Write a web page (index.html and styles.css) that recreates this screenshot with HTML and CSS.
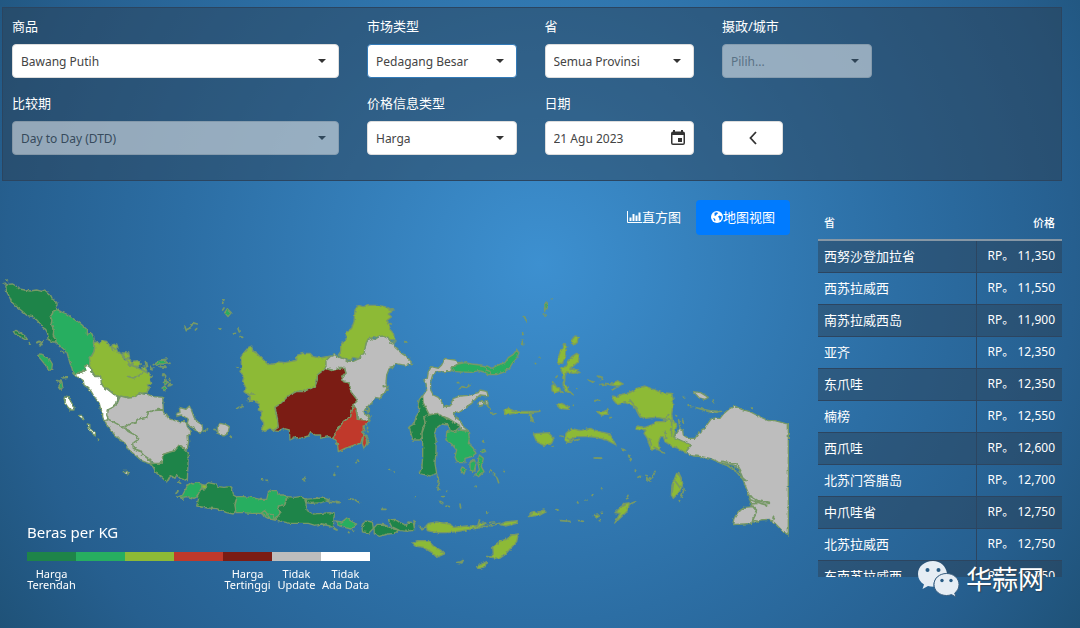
FILE: index.html
```html
<!DOCTYPE html>
<html lang="zh-CN">
<head>
<meta charset="utf-8">
<meta name="viewport" content="width=device-width, initial-scale=1">
<title>地图视图</title>
<link rel="stylesheet" href="styles.css">
</head>
<body>
<form class="filters">
  <div class="field field-wide">
    <label for="commodity">商品</label>
    <div class="control"><select id="commodity"><option>Bawang Putih</option></select></div>
  </div>
  <div class="field">
    <label for="market">市场类型</label>
    <div class="control"><select id="market" class="focused"><option>Pedagang Besar</option></select></div>
  </div>
  <div class="field">
    <label for="province">省</label>
    <div class="control"><select id="province"><option>Semua Provinsi</option></select></div>
  </div>
  <div class="field">
    <label for="city">摄政/城市</label>
    <div class="control disabled"><select id="city" class="placeholder" disabled><option>Pilih...</option></select></div>
  </div>
  <div class="field field-wide row-start">
    <label for="period">比较期</label>
    <div class="control disabled"><select id="period" disabled><option>Day to Day (DTD)</option></select></div>
  </div>
  <div class="field">
    <label for="info">价格信息类型</label>
    <div class="control"><select id="info"><option>Harga</option></select></div>
  </div>
  <div class="field">
    <label for="date">日期</label>
    <div class="date">
      <input id="date" type="text" value="21 Agu 2023">
      <button type="button" class="calendar" aria-label="日期">
        <svg viewBox="0 0 14 15" width="14" height="15"><path d="M2 0h2v1.500h6V0h2v1.500A2 2 0 0 1 14 3.500V13a2 2 0 0 1-2 2H2a2 2 0 0 1-2-2V3.500A2 2 0 0 1 2 1.500zM1.500 5v8c0 .4.200.600.600.600h9.800c.4 0 .6-.2.600-.6V5zM7 8h4v4H7z" fill="#333" fill-rule="evenodd"/></svg>
      </button>
    </div>
  </div>
  <div class="field field-end">
    <button type="button" class="back" aria-label="返回">
      <svg viewBox="0 0 8 14" width="8" height="14"><path d="M7 1 1.500 7 7 13" fill="none" stroke="#333" stroke-width="1.800"/></svg>
    </button>
  </div>
</form>

<main class="content">
  <section class="map-panel">
    <div class="tabs">
      <button type="button" class="tab"><svg viewBox="0 0 15 12" width="15" height="12"><path d="M.5 0v11.500H15" fill="none" stroke="#fff"/><path d="M3.500 10V6.500M6.500 10V3M9.500 10V4.500M12.500 10V1.500" fill="none" stroke="#fff" stroke-width="2"/></svg>直方图</button>
      <button type="button" class="tab active"><svg viewBox="0 0 12 12" width="12" height="12"><circle cx="6" cy="6" r="6" fill="#fff"/><path d="M3.500 1.800 6 1.200 7.200 2.200 5.800 3.200 5 4.500 3.600 5zM7 5.500 8.500 4.500 10.800 5.500 10 8.500 8.500 9.500 8.300 7.500zM2 7l2 .8.5 1.700-.8.8z" fill="#007bff"/></svg>地图视图</button>
    </div>
    <div class="map">
      <svg class="map-svg" viewBox="0 235 790 393" role="img" aria-label="Indonesia">
        <defs>
          <filter id="coast" x="0" y="235" width="790" height="393" filterUnits="userSpaceOnUse" color-interpolation-filters="sRGB">
            <feTurbulence type="fractalNoise" baseFrequency="0.28" numOctaves="2" seed="4" result="n"/>
            <feDisplacementMap in="SourceGraphic" in2="n" scale="3" xChannelSelector="R" yChannelSelector="G"/>
          </filter>
        </defs>
        <g class="regions" filter="url(#coast)">
          <g transform="translate(0 270) scale(.33333)">
            <path class="low" d="M17 50 22 43 38 42 48 48 58 57 75 60 90 63 110 60 125 64 134 60 142 67 152 76 158 88 170 97 172 104 166 112 170 120 160 124 157 132 151 140 156 150 154 160 158 172 161 185 160 195 167 205 168 216 158 216 150 212 144 208 143 190 137 178 128 172 120 160 108 148 98 140 80 136 65 122 50 110 35 96 28 80 20 65zM40 184 48 181 60 188 75 198 82 208 74 208 60 200 45 192z"/>
            <path class="mid" d="M170 118 185 126 200 132 218 145 235 156 250 168 262 180 262 192 275 190 282 205 280 220 284 232 282 245 275 258 268 262 270 275 268 288 258 292 262 300 245 305 235 308 225 316 220 312 216 295 210 280 205 262 200 245 188 235 178 226 168 216 167 205 160 195 161 185 158 172 154 160 156 150 151 140 157 132 160 124zM113 257 122 252 130 255 135 263 150 270 157 282 155 300 148 300 136 285 128 275zM178 340l8-4 2 16-6 8-5-6z"/>
            <path class="olive" d="M282 218 290 215 300 222 308 212 320 214 328 228 338 232 350 240 355 248 368 256 372 268 385 275 390 285 410 292 425 300 440 308 457 318 450 328 455 340 442 345 448 355 440 368 420 370 408 384 398 386 380 380 358 380 340 372 325 358 310 350 300 330 302 318 285 318 278 305 272 295 268 288 270 275 268 262 275 258 282 245 284 232zM334 230l4-6 12-2 4 10-6 10-10 0zM366 249l20 0 3 14-14 0zM376 264l14 4 8 14-10 2zM395 275l17-3 12 10-6 8-18-2zM425 293l10-2 6 12-8 2z"/>
            <path class="none" d="M225 316 235 308 245 306 258 302 254 290 262 286 272 294 272 305 285 320 302 320 304 340 310 350 325 360 340 372 356 382 348 395 346 410 332 418 322 420 326 435 322 452 312 452 308 440 308 428 302 418 298 400 290 390 280 375 272 362 262 352 252 345 250 332 235 322zM192 385 196 378 205 380 210 390 216 400 222 412 222 420 212 420 204 412 196 400zM238 436 246 436 252 450 244 446zM262 462 270 464 268 472 276 480 286 488 286 498 276 490 264 474z"/>
            <path class="specks" d="M386 320l14 4 16-6 12-10M10 38l10 8M20 30l4 2M88 218l3 4M112 218l6-4 6 6 6-8M118 224l8 0M183 244l8 4M188 324l14-2M172 332l12 2M182 358l-6-8M295 508l1 3M436 275l4 16M452 298l10-4M555 170l4 12M562 178l10-5 8-15 12 4M586 180l4-4M572 162l6-2M486 320l6-8M506 324l4 8M460 284l12-6"/>
            <path class="mid" d="M466 282l10-8 20-4 4 8-8 4-14 0-8 4zM490 338l6-6 6 6-6 6zM486 354l8-6 6 8-8 6z"/>
            <path class="specks" d="M452 292l4 8M482 270l18-3M500 278l10 2M480 290l18 2M488 312l8 4 2 16M500 334l16 10M504 348l8-2"/>
          </g>
          <g transform="translate(100 380) scale(.33333)">
            <path class="gray" d="M22 90 38 82 52 70 58 55 62 48 85 54 105 52 118 38 130 42 145 44 160 50 188 52 190 90 175 88 160 92 145 96 140 112 112 118 108 130 95 128 80 138 66 142 55 134 40 126 25 118 20 105z"/>
            <path class="gray" d="M66 142 80 138 95 128 108 130 112 118 140 112 145 96 160 92 190 90 190 98 200 102 205 115 218 120 240 125 258 125 262 140 274 155 264 168 266 185 262 205 255 212 245 198 236 196 225 212 205 218 188 224 187 245 175 252 165 250 155 245 145 235 130 225 120 212 100 205 96 190 115 178 110 168 95 160 85 150z"/>
            <path class="gray" d="M15 122 25 118 40 126 55 134 66 142 75 145 85 155 95 160 110 168 115 178 98 190 100 205 120 215 130 225 148 240 155 250 145 250 125 242 105 225 85 208 75 190 55 175 35 155 20 135zM228 100 240 98 238 82 258 88 268 78 275 92 282 112 292 125 306 134 308 148 300 160 285 148 270 140 262 130 265 118 245 105 232 108zM352 142 360 130 378 134 388 140 384 160 372 168 354 160zM70 274l12 0 4 8-10-2z"/>
            <path class="low" d="M150 252 165 250 187 250 188 224 205 218 225 212 238 196 250 204 265 218 264 250 262 302 240 295 230 285 225 295 215 288 208 292 200 306 188 295 170 280 160 262z"/>
            <path class="mid" d="M230 352 248 345 260 322 268 308 280 312 290 308 308 314 302 330 292 350 282 355 262 350 245 352z"/>
            <path class="low" d="M318 314 325 308 345 312 355 320 372 322 390 320 398 330 400 345 412 352 405 370 408 390 400 402 380 398 350 386 320 384 290 378 296 355 292 348 302 328 316 326z"/>
            <path class="olive" d="M305 314 320 316 316 326 306 324z"/>
            <path class="mid" d="M412 350 430 350 455 352 480 358 500 358 505 338 515 332 530 332 535 345 550 345 560 348 555 372 535 380 540 400 528 418 512 418 505 408 490 402 478 400 455 400 430 398 408 398 405 375zM480 402 494 392 502 402 518 404 524 420 506 416z"/>
            <path class="low" d="M562 350 585 352 600 350 620 358 618 375 622 392 640 402 665 400 690 398 703 402 700 442 712 450 690 438 665 432 645 436 625 430 600 430 570 430 545 424 525 420 540 400 535 378 555 374zM615 358 640 356 670 354 688 360 665 368 635 370 618 368z"/>
            <path class="specks" d="M228 340l6-6M245 352l4 6M236 306l6 4M310 154l8-4M322 146l2 2M342 148l8 2M392 170l2 2M485 298l4 2M498 300l4 1M608 298l8-3M612 302l4 0M682 364l12 4M708 364l10 2M702 284l2 2"/>
          </g>
          <g transform="translate(220 290) scale(.33333)">
            <path class="olive" d="M62 200 70 190 85 172 95 168 98 182 110 190 125 205 145 224 160 222 175 216 195 218 215 214 230 210 230 196 250 190 270 190 280 200 300 204 330 198 320 212 318 232 305 245 292 255 292 270 285 290 270 296 250 305 230 304 205 318 195 328 180 342 165 352 168 375 175 400 175 412 160 422 150 415 135 424 125 418 132 400 122 385 125 365 115 360 118 342 100 332 88 335 92 320 72 305 78 295 68 275 72 258 60 245 65 230z"/>
            <path class="gray" d="M318 212 330 200 345 194 355 202 372 206 385 214 400 214 420 205 432 185 440 155 450 145 465 148 480 138 500 140 510 150 520 160 525 172 545 190 560 200 578 220 560 226 545 224 525 220 520 232 508 235 500 255 498 280 505 300 490 310 480 325 465 322 455 340 440 350 432 365 435 375 450 380 448 392 418 392 412 370 402 345 412 330 392 305 388 278 372 278 365 262 378 250 374 232 360 232 345 242 330 238 318 235z"/>
            <path class="high" d="M160 422 175 412 172 385 165 352 180 342 205 318 230 304 250 305 285 290 292 270 292 255 318 235 335 242 350 238 372 232 378 250 365 258 370 275 388 280 392 305 412 330 400 345 392 380 370 395 352 420 340 445 325 440 302 445 302 435 285 435 272 425 265 438 240 445 225 442 210 450 208 420 190 415 175 424z"/>
            <path class="red" d="M400 345 408 360 412 388 450 392 440 402 430 410 428 440 422 460 400 466 375 475 355 485 352 460 340 445 352 420 370 395 392 380zM432 430 438 440 440 460 432 476 427 460z"/>
            <path class="olive" d="M355 195 362 185 362 160 378 150 380 125 395 115 402 95 405 60 415 46 430 50 445 46 475 46 495 50 510 58 520 62 505 72 515 80 500 92 510 100 510 118 520 130 525 150 510 148 490 138 470 140 445 146 438 160 432 190 415 206 398 202 395 212 378 206 365 204z"/>
            <path class="mid" d="M14 68l8-12 12 12-10 12z"/>
            <path class="specks" d="M490 290l14-2-8 18M436 360l10 4M440 350l8 10M445 368l2 16M430 408l6 16M442 410l2 16M440 436l6 12-4 16M508 60l14 0M500 98l14 4M510 158l10 4 8-10M555 154l6 2M8 40l4-12M8 60l4-6M54 116l4 10M40 132l6-2M60 140l8 2M0 116l4 2M50 230l4 2M50 356l6-4 8 0M66 350l4-2M84 326l14 8M80 312l24 0M30 438l3 2"/>
          </g>
          <g transform="translate(400 290) scale(.33333)">
            <path class="low" d="M66 318 72 340 80 358 88 375 76 378 72 385 76 400 70 410 66 425 68 440 60 450 38 450 28 410 42 402 48 380 58 365 54 345 58 328z"/>
            <path class="low" d="M88 375 110 370 130 380 150 388 178 400 180 410 162 426 150 420 145 405 125 402 108 415 104 430 108 450 108 485 105 520 110 550 90 558 58 550 66 530 68 500 68 460 66 430 76 400 72 382z"/>
            <path class="gray" d="M155 238 152 244 130 245 110 245 98 255 92 275 92 300 100 315 115 322 125 335 132 350 150 348 160 325 180 318 205 316 235 308 240 300 260 304 265 318 240 315 232 322 215 340 200 350 180 366 160 368 165 380 180 392 190 410 205 422 182 420 178 405 160 395 145 385 128 378 110 370 88 374 78 355 70 338 68 318 80 300 78 280 70 270 82 265 85 245 95 230 115 235 125 225 135 205 150 208 165 210 172 218 200 216 175 222 155 232zM234 340l10-8 10 6-6 8-10 4zM256 332l8 2 0 12-6-2z"/>
            <path class="mid" d="M152 234 175 222 195 218 215 222 240 225 262 228 275 235 295 225 315 218 325 203 340 193 350 180 357 188 350 205 338 218 328 235 310 247 290 254 265 254 255 246 235 242 215 247 185 246 160 244zM255 230 258 240 270 244 272 252M434 42l8-4 0 16-6 4z"/>
            <path class="mid" d="M140 425 150 422 160 425 180 420 205 424 208 445 205 460 220 475 228 490 215 500 195 505 195 518 172 518 165 500 170 480 155 462 138 450zM210 515 222 508 228 520 222 545 210 540zM238 495 250 505 244 530 252 545 235 560 224 555 238 540 234 520zM182 540 188 528 196 540 192 552zM243 482l10-4 4 6-10 4z"/>
            <path class="olive" d="M515 150 525 138 535 140 532 158 520 165zM475 205 482 180 495 160 500 170 498 195 488 220 474 220zM480 235 500 228 505 210 515 200 530 190 538 195 535 215 520 228 510 235 530 242 540 248 520 250 500 246 495 260 494 280 505 300 520 315 500 305 490 290 488 250zM470 345 485 340 505 350 508 358 480 356zM312 360 325 355 345 364 420 364 385 370 345 370 315 374zM390 372l6 2 4 22-6-4zM400 432 415 430 445 428 462 445 455 460 432 467 410 455zM498 430 515 415 540 422 570 415 600 425 630 432 648 465 620 450 590 442 560 440 530 440 512 448 505 460 495 450zM456 286l8-4 6 10 10 4-2 8-12 4-10-6zM482 300l8 8-8 2z"/>
            <path class="specks" d="M172 278l4 0M178 298l8-8 14 2 10-6M238 348l8-2M262 348l8 8M272 368l6 6 10-4M250 452l2 4M270 544l4-2M280 552l10 8 6 18M112 555l4 20-2 25M312 544l1 1M14 156l4 0M430 72l8 4M434 54l0 10M370 80l8 2 0 14M368 128l0 6M366 150l2 14M454 26l2 0M349 178l4 8M418 202l2 2M406 220l1 1M468 262l4-4M458 276l4 6M502 444l16 8 20-4M500 460l14-4M480 438l10 2M520 346l1 0M585 332l12 0M588 504l16 0M566 270l14 6M600 262l8 6M606 282l12 4M604 595l1 1M530 298l2 0"/>
          </g>
          <g transform="translate(530 370) scale(.33333)">
            <path class="olive" d="M246 78 262 80 278 72 300 68 320 55 345 48 370 58 395 68 425 70 430 90 428 108 425 135 428 150 440 165 432 200 470 215 484 225 465 248 445 235 425 228 405 215 400 200 392 200 385 215 388 238 365 240 358 225 352 205 342 190 348 180 318 178 320 168 345 172 365 165 378 155 405 155 412 150 400 145 375 142 345 145 330 140 320 120 310 108 285 98 262 104 250 90z"/>
            <path class="gray" d="M432 202 440 190 448 178 458 182 460 195 475 205 495 205 505 190 522 178 530 165 545 145 570 145 580 132 600 115 615 108 635 118 660 125 685 138 715 152 735 152 765 160 775 162 775 495 760 485 745 470 730 455 715 448 690 450 672 460 668 448 680 425 670 412 662 400 660 385 655 370 645 345 635 315 628 300 610 285 570 278 540 265 515 260 490 258 466 248 484 225zM608 464 612 445 625 425 645 412 670 410 680 420 672 440 665 460 640 462zM490 65 512 68 535 82 525 88 508 84zM495 112 540 122 575 124 545 128z"/>
            <path class="olive" d="M225 40 250 42 262 32 280 42 265 48 245 46zM200 125 220 125 235 118 236 132 215 136zM440 310 452 320 458 345 445 370 430 385 424 375 426 345zM285 400 300 398 290 425 270 445 255 458 270 430 255 428zM0 430l20-2 22-8 6 6-16 8-32 4zM190 436l12-4 6 6-8 6z"/>
            <path class="specks" d="M570 278l40 16 20 24 12 14M575 274l45 8 12 20M590 286l36 24M628 316l20 16M660 378l24 14 34 8M656 388l36 12 22 6M660 402l20-2M672 450l14 6M728 450l4-12M415 145l10 10 0 40M400 150l16-16M446 150l4 22M372 232l30 16M358 205l6 20M404 185l6 20M300 90l22 26M320 122l10 18M460 80l4 4M475 106l10 4M550 90l2 8M438 136l2 2M458 150l2 10M664 114l2 2M246 60l14-8M210 44l10 2M180 32l8 4M195 92l14 0M205 18l12 4M240 143l2 0M276 236l8 4M296 256l6 16M316 300l1 4M324 322l8-4M348 316l6 16 6-10M375 304l-8 20M354 334l6-2M430 340l-4 30M446 308l8 20 8 30-8 24M436 334l12 16M448 392l2 2M294 376l-4 10M300 402l14-6M168 390l3 0M186 376l3 0M214 354l1 0M215 430l2 0M142 396l2 3M78 418l8 3M92 452l28 2M146 452l14 2M208 452l2 0M272 412l14-8M195 264l20 1M66 228l3 1"/>
          </g>
          <g transform="translate(320 400) scale(.33333)">
            <path class="mid" d="M46 363 65 366 80 354 92 363 110 372 92 387 75 382 55 377z"/>
            <path class="low" d="M125 380 135 363 157 366 160 385 147 399 128 396zM162 383 172 373 190 373 205 380 215 386 236 390 225 400 205 402 178 409 163 402zM205 360 225 358 240 368 260 376 264 366 280 368 284 390 262 394 240 392 215 380z"/>
            <path class="olive" d="M318 378 325 370 350 366 390 372 400 382 440 378 470 378 480 370 500 368 475 384 430 392 385 398 350 398 322 392zM540 374l16-8 36-4-2 8-34 8zM276 430 295 422 325 422 340 438 362 450 374 462 350 472 335 457 310 442 285 438zM595 402 590 425 570 447 555 464 540 475 510 472 520 460 518 440 540 423 560 418 575 405zM470 500 500 485 495 500 475 507zM625 350 640 338 660 336 660 346zM410 487l12-2 8-4-4 8z"/>
            <path class="specks" d="M475 372l4-12M486 382l16-6 18 2M510 368l12-2M524 374l14-4M298 378l6 8M308 384l8-2M282 362l4 20M85 396l2 2M98 390l4 4M42 386l8 4M502 470l6 0M32 304l12 2M50 308l6 0M84 296l16 2M106 300l12 8M184 328l14 0M354 230l2 40M360 304l8 4M376 318l12 2M420 312l2 12M368 290l2 0M380 274l2 0M284 292l2 0M210 208l2 2M222 216l1 0M44 220l0 6M52 200l2 0M108 188l8-4M112 180l2 0M488 124l2 2M468 258l1 2M500 338l1 2"/>
          </g>
        </g>
      </svg>
      <div class="legend">
        <h2>Beras per KG</h2>
        <ul>
          <li class="k-low"><span>Harga<br>Terendah</span></li>
          <li class="k-mid"></li>
          <li class="k-olive"></li>
          <li class="k-red"></li>
          <li class="k-high"><span>Harga<br>Tertinggi</span></li>
          <li class="k-gray"><span>Tidak<br>Update</span></li>
          <li class="k-none"><span>Tidak<br>Ada Data</span></li>
        </ul>
      </div>
    </div>
  </section>

  <aside class="prices">
    <table>
      <thead><tr><th>省</th><th>价格</th></tr></thead>
      <tbody>
        <tr><td>西努沙登加拉省</td><td>RP。 11,350</td></tr>
        <tr><td>西苏拉威西</td><td>RP。 11,550</td></tr>
        <tr><td>南苏拉威西岛</td><td>RP。 11,900</td></tr>
        <tr><td>亚齐</td><td>RP。 12,350</td></tr>
        <tr><td>东爪哇</td><td>RP。 12,350</td></tr>
        <tr><td>楠榜</td><td>RP。 12,550</td></tr>
        <tr><td>西爪哇</td><td>RP。 12,600</td></tr>
        <tr><td>北苏门答腊岛</td><td>RP。 12,700</td></tr>
        <tr><td>中爪哇省</td><td>RP。 12,750</td></tr>
        <tr><td>北苏拉威西</td><td>RP。 12,750</td></tr>
        <tr><td>东南苏拉威西</td><td>RP。 12,750</td></tr>
      </tbody>
    </table>
  </aside>
</main>

<div class="watermark">
  <svg viewBox="0 0 42 36" width="42" height="36">
    <path d="M15 0C6.500 0 0 5.500 0 13c0 4.500 2.200 8 6 10.500L4.500 28l5.500-3c1.800.5 3.500.7 5.500.7C15 17 21 12.500 29 12.500 28 5 22.500 0 15 0z" fill="#e6edf4"/>
    <path d="M28.500 12.500c-7 0-12.500 4.800-12.500 11s5.500 11 12.500 11c1.800 0 3.400-.3 5-.9l4.500 2.400-1.300-4C39.500 30 41 27 41 23.500c0-6.200-5.500-11-12.500-11z" fill="#e6edf4" stroke="#3a5f80" stroke-width="1"/>
    <g fill="#285b84"><circle cx="9.500" cy="9" r="2"/><circle cx="20.500" cy="9" r="2"/><circle cx="24" cy="19.500" r="1.700"/><circle cx="33" cy="19.500" r="1.700"/></g>
  </svg>
  <span>华蒜网</span>
</div>
</body>
</html>
```
FILE: styles.css
```css
* {
  box-sizing: border-box;
}

html {
  min-height: 100%;
}

body {
  position: relative;
  min-height: 100vh;
  margin: 0;
  padding-top: 7px;
  overflow-x: hidden;
  color: #fff;
  background: radial-gradient(circle at 50% 42%, #3d90d0 0%, #2c6ea4 55%, #265f8f 82%, #1f5278 100%);
  font-family: "Noto Sans", "Noto Sans CJK SC", sans-serif;
  font-size: 13px;
}

button,
input,
select {
  font: inherit;
}

/* Filters */

.filters {
  display: grid;
  grid-template-columns: repeat(6, minmax(0, 1fr));
  gap: 16px 28px;
  margin: 0 18px 0 2px;
  padding: 9px 12px 25px 9px;
  border: 1px solid #2b4560;
  background: rgba(44, 62, 80, 0.45);
}

.field-wide {
  grid-column: span 2;
}

.row-start {
  grid-column: 1 / span 2;
}

.field label {
  display: block;
  margin-bottom: 9px;
  line-height: 18px;
}

.field-end {
  align-self: end;
}

.control,
.date {
  position: relative;
}

.control::after {
  content: "";
  position: absolute;
  top: 15px;
  right: 13px;
  border: 4px solid transparent;
  border-top-color: #333;
  border-bottom: 0;
  pointer-events: none;
}

.control select,
.date input {
  display: block;
  width: 100%;
  height: 34px;
  padding: 0 8px;
  border: 1px solid #ddd;
  border-radius: 4px;
  appearance: none;
  background: #fff;
  color: #444;
  font-size: 12px;
  opacity: 1;
}

.control .focused {
  border-color: #337ab7;
}

.control.disabled {
  opacity: 0.5;
}

.control .placeholder {
  color: #888;
}

.calendar {
  position: absolute;
  top: 9px;
  right: 9px;
  display: flex;
  padding: 0;
  border: 0;
  background: none;
}

.back {
  display: flex;
  align-items: center;
  justify-content: center;
  width: 61px;
  height: 34px;
  border: 1px solid #ddd;
  border-radius: 4px;
  background: #fff;
}

/* Map */

.content {
  display: grid;
  grid-template-columns: minmax(0, 1fr) 244px;
  gap: 28px;
  padding-right: 18px;
}

.tabs {
  display: flex;
  justify-content: flex-end;
  padding-top: 19px;
}

.tab {
  display: flex;
  align-items: center;
  height: 35px;
  padding: 0 15px 2px;
  border: 0;
  border-radius: 4px;
  background: none;
  color: #fff;
}

.tab.active {
  background: #007bff;
}

.map {
  position: relative;
}

.map-svg {
  display: block;
  width: 100%;
}

.regions path {
  stroke: #779967;
  stroke-width: 4;
  stroke-linejoin: round;
}

.regions .specks {
  fill: none;
  stroke-width: 5;
  stroke-linecap: round;
}

.low { fill: #1e8449; }
.mid { fill: #27ae60; }
.olive { fill: #8dba36; }
.red { fill: #c0392b; }
.high { fill: #7b1c14; }
.gray { fill: #bdbdbd; }
.none { fill: #fff; }

.legend {
  position: absolute;
  bottom: 38px;
  left: 27px;
  width: 343px;
}

.legend h2 {
  margin: 0 0 10px;
  font-size: 15px;
  font-weight: 400;
  line-height: 20px;
}

.legend ul {
  display: grid;
  grid-template-columns: repeat(7, 1fr);
  margin: 0;
  padding: 0;
  list-style: none;
}

.legend li {
  display: flex;
  justify-content: center;
  padding-top: 7px;
  border-top: 9px solid;
}

.legend span {
  color: #fff;
  font-size: 11px;
  line-height: 11px;
  text-align: center;
  white-space: nowrap;
}

.k-low { color: #1e8449; }
.k-mid { color: #27ae60; }
.k-olive { color: #8dba36; }
.k-red { color: #c0392b; }
.k-high { color: #7b1c14; }
.k-gray { color: #bdbdbd; }
.k-none { color: #fff; }

/* Prices */

.prices {
  max-height: 369px;
  margin-top: 27px;
  overflow: hidden;
}

.prices table {
  width: 100%;
  border-collapse: collapse;
}

.prices th {
  height: 32px;
  padding: 0 6px 4px;
  border-bottom: 2px solid #8797a5;
  font-size: 11px;
  font-weight: 500;
  text-align: left;
}

.prices td {
  height: 32px;
  padding: 0 6px;
  border-bottom: 1px solid #2c4560;
  line-height: 18px;
}

.prices th:last-child,
.prices td:last-child {
  width: 86px;
  padding-right: 7px;
  text-align: right;
  white-space: nowrap;
}

.prices td:last-child {
  border-left: 1px solid #2c4560;
  font-size: 12px;
}

.prices tbody tr:nth-child(odd) {
  background: rgba(44, 62, 80, 0.45);
}

.watermark {
  position: absolute;
  right: 36px;
  bottom: 31px;
  display: flex;
  align-items: center;
  gap: 6px;
  font-size: 26px;
  line-height: 36px;
  text-shadow: 1px 1px 1px #345;
}
```
